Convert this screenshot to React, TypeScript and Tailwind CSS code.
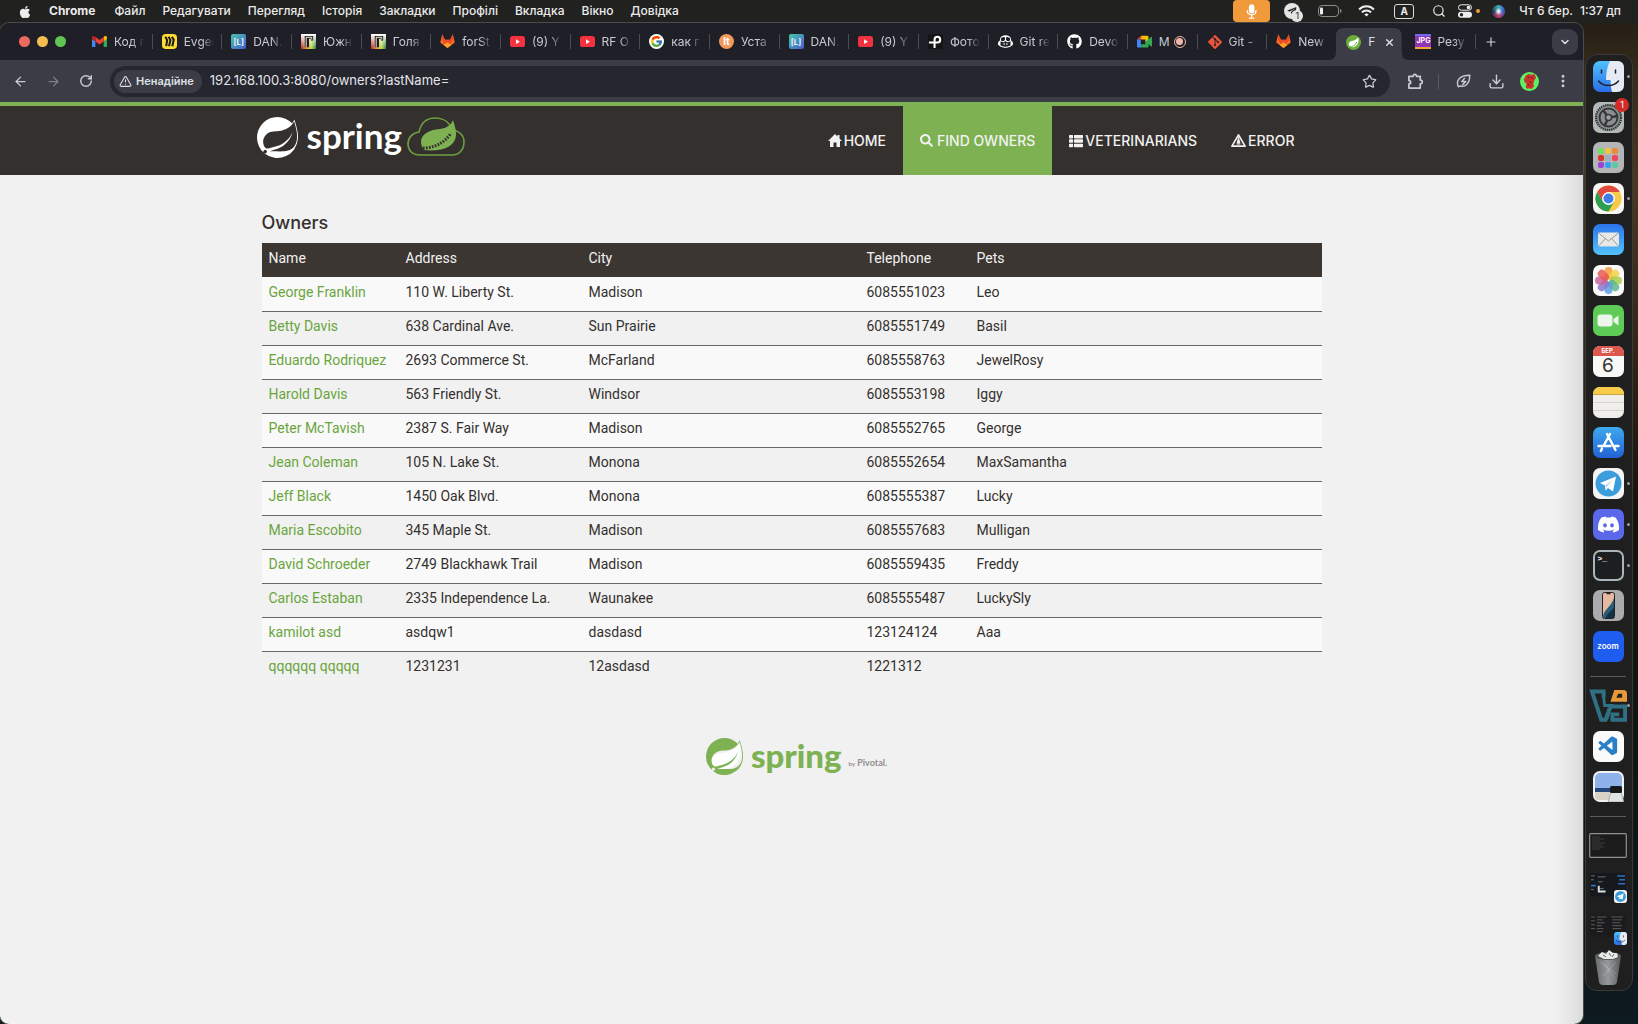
import React from "react";
import {
  ArrowLeft, ArrowRight, RotateCw, Star, Download, EllipsisVertical, Plus, X, ChevronDown,
  Search, TriangleAlert,
} from "lucide-react";
import { FaApple, FaGithub, FaGitAlt, FaThList, FaSearch, FaTelegramPlane, FaDiscord } from "react-icons/fa";
import { SiSpring } from "react-icons/si";
import { FcGoogle } from "react-icons/fc";
import { VscVscode } from "react-icons/vsc";
import { GoCopilot } from "react-icons/go";

const menus = ["Файл", "Редагувати", "Перегляд", "Історія", "Закладки", "Профілі", "Вкладка", "Вікно", "Довідка"];

const owners = [
  ["George Franklin", "110 W. Liberty St.", "Madison", "6085551023", "Leo"],
  ["Betty Davis", "638 Cardinal Ave.", "Sun Prairie", "6085551749", "Basil"],
  ["Eduardo Rodriquez", "2693 Commerce St.", "McFarland", "6085558763", "JewelRosy"],
  ["Harold Davis", "563 Friendly St.", "Windsor", "6085553198", "Iggy"],
  ["Peter McTavish", "2387 S. Fair Way", "Madison", "6085552765", "George"],
  ["Jean Coleman", "105 N. Lake St.", "Monona", "6085552654", "MaxSamantha"],
  ["Jeff Black", "1450 Oak Blvd.", "Monona", "6085555387", "Lucky"],
  ["Maria Escobito", "345 Maple St.", "Madison", "6085557683", "Mulligan"],
  ["David Schroeder", "2749 Blackhawk Trail", "Madison", "6085559435", "Freddy"],
  ["Carlos Estaban", "2335 Independence La.", "Waunakee", "6085555487", "LuckySly"],
  ["kamilot asd", "asdqw1", "dasdasd", "123124124", "Aaa"],
  ["qqqqqq qqqqq", "1231231", "12asdasd", "1221312", ""],
];

/* ---------- tab icons ---------- */

const Gmail = () => (
  <svg viewBox="0 0 24 18" className="w-[15px]">
    <path fill="#4285f4" d="M1.6 18h3.8V8.7L0 4.6v11.8C0 17.300 .7 18 1.600 18z" />
    <path fill="#34a853" d="M18.600 18h3.800c.9 0 1.600-.7 1.600-1.600V4.600l-5.400 4.100z" />
    <path fill="#fbbc04" d="M18.600 1.600v7.100L24 4.600V2.400c0-2-2.300-3.200-3.900-2z" />
    <path fill="#ea4335" d="M5.400 8.700V1.600L12 6.500l6.600-4.900v7.100L12 13.600z" />
    <path fill="#c5221f" d="M0 2.400v2.200l5.400 4.100V1.600L3.900.4C2.300-.8 0 .4 0 2.400z" />
  </svg>
);
const Miro = () => (
  <svg viewBox="0 0 16 16" className="w-[15px]">
    <rect width="16" height="16" rx="4" fill="#ffdd33" />
    <path d="M3.500 3l2 3.500L4.500 13M7 3l2 3.500L7.500 13M10.500 3l2 3L11 13" fill="none" stroke="#1c1c1e" strokeWidth="2.200" />
  </svg>
);
const Dan = () => (
  <span className="flex size-[15px] items-center justify-center rounded-[2px] bg-linear-to-br from-[#49c5a5] to-[#4a55d0] text-[8px] font-semibold text-white">[L]</span>
);
const Gismeteo = () => (
  <svg viewBox="0 0 16 16" className="w-[15px]">
    <defs>
      <linearGradient id="gis"><stop stopColor="#b3202a" /><stop offset=".4" stopColor="#f2a03a" /><stop offset=".7" stopColor="#b8d84a" /><stop offset="1" stopColor="#247a38" /></linearGradient>
      <linearGradient id="gisfade" x2="0" y2="1"><stop stopColor="#fff" /><stop offset="1" stopColor="#fff" stopOpacity="0" /></linearGradient>
    </defs>
    <rect width="16" height="16" fill="url(#gis)" />
    <rect width="16" height="16" fill="url(#gisfade)" />
    <path d="M4 2h9v5h-2.500V5H8.500v9H4z" fill="#1b1b1b" />
    <path d="M5.500 14V3.500h6V6" stroke="#fff" strokeWidth="1" fill="none" />
  </svg>
);
const Gitlab = () => (
  <svg viewBox="0 0 24 23" className="w-[15px]">
    <path fill="#fc6d26" d="M12 22.500L23.600 13.500 20.500.5 16 9H8L3.500.5.4 13.500z" />
    <path fill="#e24329" d="M12 22.500L3 9 3.500.5 8 9h8l4.500-8.500L21 9z" opacity=".75" />
    <path fill="#fca326" d="M12 22.500L6 17.500 12 13l6 4.500z" />
  </svg>
);
const Youtube = () => (
  <svg viewBox="0 0 16 12" className="w-[15px]">
    <rect width="16" height="12" rx="3" fill="#f4323f" />
    <path d="M6.400 3.500l4.200 2.500-4.200 2.500z" fill="#fff" />
  </svg>
);
const Lt = () => <span className="flex size-[15px] items-center justify-center rounded-full bg-[#f39a5b] text-[10px] font-bold text-white">lt</span>;
const Photo = () => (
  <svg viewBox="0 0 16 16" className="w-[15px]">
    <rect width="16" height="16" rx="2" fill="#151515" />
    <path d="M1 9h9a3 3 0 1 0-3-3v9" stroke="#fff" strokeWidth="2.200" fill="none" />
  </svg>
);
const Meet = () => (
  <svg viewBox="0 0 18 16" className="w-[15px]">
    <path fill="#ea4335" d="M0 5.500L5 1v4.500z" />
    <path fill="#fbbc04" d="M5 1h7.500q1.300 0 1.300 1.300V7L10 9V5.500H5z" />
    <path fill="#4285f4" d="M0 5.500h4.600V11H5v4H1.300Q0 15 0 13.700z" />
    <path fill="#34a853" d="M5 11h5V8l7-5.700q1-.5 1 .5v10.500q0 1-1 .4L13.800 11v2.700q0 1.300-1.300 1.300H5z" />
  </svg>
);
const SpringDot = () => (
  <svg viewBox="0 0 16 16" className="w-[15px]">
    <circle cx="8" cy="8" r="8" fill="#6aad3d" />
    <path d="M13 2.500c1.500 5-.5 10-5.500 10.500C4 13.400 2.300 11 3 8.800 4 5.500 10.500 7 13 2.500z" fill="#fff" />
    <path d="M3 13c4-.3 7-2 8.500-5.500" stroke="#6aad3d" fill="none" />
  </svg>
);
const Jpg = () => (
  <span className="flex h-[15px] w-[16px] items-center justify-center border-y-2 border-t-[#6f6af0] border-b-[#f0a53a] bg-[#9334b5] text-[7px] font-bold text-white">JPG</span>
);

const tabs: { label: string; icon: React.ReactNode; kind?: "active" | "rec" | "before" }[] = [
  { label: "Код г", icon: <Gmail /> },
  { label: "Evger", icon: <Miro /> },
  { label: "DAN.", icon: <Dan /> },
  { label: "Южн", icon: <Gismeteo /> },
  { label: "Голя", icon: <Gismeteo /> },
  { label: "forSt", icon: <Gitlab /> },
  { label: "(9) Y", icon: <Youtube /> },
  { label: "RF O", icon: <Youtube /> },
  { label: "как г", icon: <FcGoogle className="size-[15px] rounded-full bg-white p-px" /> },
  { label: "Уста", icon: <Lt /> },
  { label: "DAN.", icon: <Dan /> },
  { label: "(9) Y", icon: <Youtube /> },
  { label: "Фото", icon: <Photo /> },
  { label: "Git re", icon: <GoCopilot className="size-[15px] text-white" /> },
  { label: "Devo", icon: <FaGithub className="size-[15px] text-white" /> },
  { label: "M", icon: <Meet />, kind: "rec" },
  { label: "Git -", icon: <FaGitAlt className="size-[16px] text-[#e8543a]" /> },
  { label: "New", icon: <Gitlab />, kind: "before" },
  { label: "F", icon: <SpringDot />, kind: "active" },
  { label: "Резу", icon: <Jpg /> },
];

function MenuBar() {
  return (
    <header className="flex h-[23px] shrink-0 items-center bg-[#212120] text-[12px] text-[#ececec]">
      <FaApple className="ml-[18px] size-[14px]" />
      <nav className="ml-[17px] flex items-center gap-[17px] pb-[2px]">
        <button className="mr-[2px] text-[12px] font-bold">Chrome</button>
        {menus.map((m) => <button key={m} className="font-medium">{m}</button>)}
      </nav>
      <div className="mr-[17px] ml-auto flex items-center pb-px">
        <span className="flex h-[22px] w-[37px] items-center justify-center rounded-[4px] bg-[#f09a3c] text-white">
          <svg viewBox="0 0 12 16" className="h-[15px]" fill="none" stroke="white" strokeWidth="1.300" strokeLinecap="round">
            <rect x="3.700" y="1" width="4.600" height="8.500" rx="2.300" fill="white" />
            <path d="M1.300 7c0 6 9.400 6 9.400 0M6 12v2.800M3.500 15h5" />
          </svg>
        </span>
        <span className="relative ml-[14px] flex size-[16px] items-center justify-center rounded-full bg-[#e4e4e4]">
          <FaTelegramPlane className="size-[10px] text-[#222]" />
          <span className="absolute -right-[3px] -bottom-[3px] flex size-[12px] items-center justify-center rounded-full bg-[#e4e4e4] text-[9px] text-[#222]">1</span>
        </span>
        <svg viewBox="0 0 24 12" className="ml-[18px] h-[12px] w-[24px]">
          <rect x=".5" y=".5" width="20" height="11" rx="3.500" fill="none" stroke="#8b8b8b" />
          <rect x="2" y="2.500" width="3" height="7" rx="1.200" fill="#eee" />
          <path d="M22 4c2 .5 2 3.500 0 4z" fill="#8b8b8b" />
        </svg>
        <svg viewBox="0 0 18 13" className="ml-[16px] h-[12px] w-[17px]" fill="none" stroke="#eee" strokeWidth="2.200">
          <path d="M1 4.800c4.500-4.500 11.500-4.500 16 0M4 8c2.800-2.800 7.200-2.800 10 0" />
          <path d="M9 12.500L6.600 10c1.300-1.200 3.500-1.200 4.800 0z" fill="#eee" stroke="none" />
        </svg>
        <span className="ml-[19px] flex h-[15px] w-[20px] items-center justify-center rounded-[3px] border border-[#ddd] text-[10px] font-bold">A</span>
        <Search className="ml-[18px] size-[14px]" />
        <svg viewBox="0 0 14 14" className="ml-[12px] size-[14px]">
          <rect x=".5" y=".8" width="13" height="5.400" rx="2.700" fill="none" stroke="#eee" />
          <circle cx="10.500" cy="3.500" r="1.800" fill="#eee" />
          <rect y="7.800" width="14" height="6" rx="3" fill="#eee" />
          <circle cx="3.500" cy="10.800" r="1.700" fill="#222" />
        </svg>
        <span className="ml-[4px] size-[4px] rounded-full bg-[#f09a3c]" />
        <span className="ml-[12px] flex size-[13px] items-center justify-center rounded-full bg-[conic-gradient(#3aa7c9,#3b58c0,#c03a6c,#233a66,#37b08e)]"><span className="size-[5px] rounded-full bg-white blur-[1px]" /></span>
        <span className="ml-[14px] font-medium">Чт 6 бер.</span>
        <span className="ml-[7px] font-medium">1:37 дп</span>
      </div>
    </header>
  );
}

function TabStrip() {
  return (
    <div className="flex h-[37px] items-center bg-[#1f2027]">
      <div className="flex w-[83px] shrink-0 gap-[7px] pl-[19px]">
        <button aria-label="Close" className="size-[11px] rounded-full bg-[#ed6a5e]" />
        <button aria-label="Minimise" className="size-[11px] rounded-full bg-[#f4bf4f]" />
        <button aria-label="Full screen" className="size-[11px] rounded-full bg-[#61c554]" />
      </div>
      <div className="flex h-full min-w-0 flex-1 items-center">
        {tabs.map((t, i) =>
          t.kind === "active" ? (
            <div key={i} className="relative flex h-[33px] min-w-0 flex-1 self-end">
              <svg viewBox="0 0 80 33" preserveAspectRatio="none" className="absolute -left-[8px] h-[33px] w-[calc(100%+10px)]">
                <path d="M0 33Q7 33 7 25V9Q7 1 15 1H65Q73 1 73 9V25Q73 33 80 33z" fill="#3b3c45" />
              </svg>
              <button className="relative flex min-w-0 flex-1 items-center pb-[3px] pl-[9px] text-[12px] text-[#dfe0e6]">
                {t.icon}
                <span className="ml-[7px] w-[8px]">{t.label}</span>
                <X className="ml-[8px] size-[11px]" strokeWidth={3} />
              </button>
            </div>
          ) : (
            <button key={i} className="flex min-w-0 flex-1 items-center text-[12px] text-[#c9cad2]">
              <span className="ml-[9px] flex w-[16px] shrink-0 items-center">{t.icon}</span>
              <span className={t.kind === "rec"
                ? "ml-[6px] text-left whitespace-nowrap"
                : "ml-[6px] w-[30px] [mask-image:linear-gradient(to_right,black_60%,transparent)] text-left whitespace-nowrap"}>{t.label}</span>
              {t.kind === "rec" && <span className="ml-[4px] flex size-[12px] items-center justify-center rounded-full border border-[#f0b7ac]"><span className="size-[7px] rounded-full bg-[#f0b7ac]" /></span>}
              <span className={t.kind === "before" ? "hidden" : "ml-auto h-[15px] w-px bg-[#4b4c55]"} />
            </button>
          ),
        )}
      </div>
      <button aria-label="New tab" className="ml-[8px] text-[#d0d1d8]"><Plus className="size-[14px]" /></button>
      <button aria-label="Search tabs" className="mr-[5px] ml-[54px] flex size-[26px] items-center justify-center rounded-[9px] bg-[#3b3c45] text-[#dfe0e6]"><ChevronDown className="size-[12px]" strokeWidth={3} /></button>
    </div>
  );
}

function Toolbar() {
  return (
    <div className="flex h-[42px] items-center bg-[#3b3c45] text-[#c9cad2]">
      <button aria-label="Back" className="ml-[13px]"><ArrowLeft className="size-[15px]" /></button>
      <button aria-label="Forward" className="ml-[18px] text-[#7e7f88]"><ArrowRight className="size-[15px]" /></button>
      <button aria-label="Reload" className="ml-[18px]"><RotateCw className="size-[14px]" strokeWidth={2.500} /></button>
      <div className="ml-[17px] flex h-[31px] flex-1 items-center rounded-full bg-[#25262e] pr-[13px] pl-[4px]">
        <button className="flex h-[23px] items-center gap-[4px] rounded-full bg-[#3b3c45] pr-[8px] pl-[5px] text-[11px] font-semibold text-[#dfe0e6]">
          <TriangleAlert className="size-[13px]" />Ненадійне
        </button>
        <input aria-label="Address" defaultValue="192.168.100.3:8080/owners?lastName=" className="ml-[8px] min-w-0 flex-1 bg-transparent text-[13px] text-[#e3e4ea] outline-none" />
        <button aria-label="Bookmark"><Star className="size-[15px]" /></button>
      </div>
      <button aria-label="Extensions" className="ml-[17px]">
        <svg viewBox="0 0 18 18" className="size-[17px]" fill="none" stroke="currentColor" strokeWidth="1.800" strokeLinejoin="round">
          <path d="M2 3.500h4.500C6.500.8 10 .8 10 3.500h4v4c2.900 0 2.900 4 0 4v4.500H2v-4.500c2.600 0 2.600-3.500 0-3.500z" />
        </svg>
      </button>
      <span className="ml-[14px] h-[15px] w-px bg-[#5a5b64]" />
      <button aria-label="Energy saver" className="ml-[17px]">
        <svg viewBox="0 0 18 18" className="size-[16px]" fill="none" stroke="currentColor" strokeWidth="1.600" strokeLinejoin="round">
          <path d="M2.500 15.500C0 9 3 2.500 15.500 2.500c0 10-5.500 14-11 12zM10 5.500L6.500 9.500h4.500l-4 4" />
        </svg>
      </button>
      <button aria-label="Downloads" className="ml-[16px]"><Download className="size-[17px]" /></button>
      <button aria-label="Profile" className="ml-[15px]">
        <svg viewBox="0 0 20 20" className="size-[19px]">
          <circle cx="10" cy="10" r="10" fill="#62ee62" />
          <path d="M6 4l3-2 3 1 3-1 2 4-2 3-1 4 1 2-3 3-3-1-1 1-2-2 1-4-2-1-1-3z" fill="#c8342c" />
          <path d="M8 5l2 1M12 5l1 2M10 10l2 2M8 13l2 1" stroke="#5a1512" strokeWidth="1" />
        </svg>
      </button>
      <button aria-label="Menu" className="mr-[12px] ml-[16px]"><EllipsisVertical className="size-[16px]" strokeWidth={2.500} /></button>
    </div>
  );
}

const HomeIcon = () => (
  <svg viewBox="0 0 14 13" className="w-[14px]" fill="currentColor"><path d="M7 0L0 7h2v6h3.500V8.500h3V13H12V7h2l-2.500-2.500V1h-2v1.500z" /></svg>
);
const WarnIcon = () => (
  <svg viewBox="0 0 16 14" className="w-[15px]"><path d="M8 1L15 13H1z" fill="none" stroke="currentColor" strokeWidth="1.800" strokeLinejoin="round" /><path d="M8 4.500L6.800 9h2.400zM6 10.500h4" stroke="currentColor" fill="currentColor" strokeWidth="1.200" /></svg>
);

function SiteHeader() {
  const item = "flex items-center gap-[2px] px-[17px] text-[14px] font-medium uppercase";
  return (
    <header className="border-t-4 border-[#7eb151] bg-[#34302d]">
      <div className="mx-auto flex h-[69px] max-w-[1060px] justify-between text-[#f1f1f1]">
        <a href="#home" aria-label="Spring" className="-ml-[5px] flex items-start pt-[11px]">
          <SiSpring className="size-[41px] text-white" />
          <span className="ml-[9px] text-[35px] leading-[36px] font-bold text-white [font-family:Lato,sans-serif]">spring</span>
          <svg viewBox="0 0 58 39" className="ml-[5px] w-[58px]">
            <path d="M13 38C5 38 1 33 1 27c0-6 4-11 11-12C14 6 20 1 28 1c9 0 15 5 17 12 8 1 12 6 12 12 0 8-5 13-12 13z" fill="none" stroke="#6c9f42" strokeWidth="1.600" />
            <path d="M46 3C44 8 40 11 33 12 22 13 14 17 14 25c0 4 2 6 3 8 18 2 32-3 32-16 0-6-2-10-3-14z" fill="#7eb151" />
            <path d="M16 31c10 0 21-4 28-15" fill="none" stroke="#34302d" strokeWidth="3" strokeDasharray="1.700 1.300" />
          </svg>
        </a>
        <nav className="mr-[10px] flex">
          <a href="#home" className={item}><HomeIcon />Home</a>
          <a href="#find" className="-mt-px flex items-center gap-[4px] bg-[#7eb151] px-[17px] text-[14px] font-medium uppercase"><FaSearch className="size-[13px]" />Find owners</a>
          <a href="#vets" className={item}><FaThList className="size-[14px]" />Veterinarians</a>
          <a href="#error" className={item}><WarnIcon />Error</a>
        </nav>
      </div>
    </header>
  );
}

function OwnersPage() {
  const heads = [["Name", "w-[137px]"], ["Address", "w-[183px]"], ["City", "w-[278px]"], ["Telephone", "w-[110px]"], ["Pets", ""]];
  return (
    <main className="flex-1 bg-[linear-gradient(to_left,#dcdcdc,#f1f1f1_28px)] px-4 [font-family:Roboto,sans-serif]">
      <div className="mx-auto max-w-[1060px]">
        <h2 className="pt-[37px] text-[18px] leading-[22px] font-medium text-[#34302d] [font-family:Inter,sans-serif]">Owners</h2>
        <table className="mt-[9px] w-full table-fixed text-left text-[14px] leading-[19px] whitespace-nowrap text-[#34302d]">
          <thead>
            <tr className="h-[34px] bg-[#3b3632] text-[#f1f1f1]">
              {heads.map(([h, w]) => <th key={h} className={`${w} px-[7px] pb-[3px] font-normal`}>{h}</th>)}
            </tr>
          </thead>
          <tbody>
            {owners.map((o) => (
              <tr key={o[0]} className="h-[34px] border-b border-[#6b6866] last:border-0 odd:bg-[#f9f9f9]">
                <td className="px-[7px] pb-[3px]"><a href="#owner" className="text-[#6aa53c]">{o[0]}</a></td>
                {o.slice(1).map((c, i) => <td key={i} className="px-[7px] pb-[3px]">{c}</td>)}
              </tr>
            ))}
          </tbody>
        </table>
        <div className="mt-[53px] flex items-start justify-center pl-[10px]">
          <span className="relative">
            <svg viewBox="0 0 24 24" className="absolute inset-0 size-[37px]"><path d="M21.500 3c2 6 1 16-9 17-4 .5-7 .3-8-1C2 16 4 11 9 10c5-1 10-1 12.500-7z" fill="#fff" /></svg>
            <SiSpring className="relative size-[37px] text-[#7eb151]" />
          </span>
          <span className="ml-[8px] text-[33px] leading-[34px] font-black text-[#7eb151] [font-family:Lato,sans-serif]">spring</span>
          <span className="mt-[18px] ml-[7px] text-[9px] font-bold text-[#8e8e8e] [font-family:Lato,sans-serif]"><span className="text-[6px]">by</span> Pivotal.</span>
        </div>
      </div>
    </main>
  );
}

/* ---------- dock ---------- */

const FinderFace = ({ c }: { c: string }) => (
  <svg viewBox="0 0 31 31" className={c}>
    <defs><linearGradient id="fb" x2="0" y2="1"><stop stopColor="#4ec3fb" /><stop offset="1" stopColor="#2b6de8" /></linearGradient></defs>
    <rect width="31" height="31" rx="7" fill="url(#fb)" />
    <path d="M17 0h7q7 0 7 7v17q0 7-7 7h-5c-1-4-1.500-7-1.500-12H13C13 12 14 6 17 0z" fill="#e6eaf2" />
    <path d="M8.500 9v3M22.500 9v3M5.500 20c5 6 15 6 20 0" stroke="#223" strokeWidth="1.500" fill="none" strokeLinecap="round" />
  </svg>
);
const Gear = () => (
  <svg viewBox="0 0 31 31" className="size-[31px]">
    <rect width="31" height="31" rx="7" fill="#b4b8b6" />
    <circle cx="15.500" cy="15.500" r="12.500" fill="#8f9492" stroke="#33373a" strokeWidth="2.200" strokeDasharray="1.500 .7" />
    <circle cx="15.500" cy="15.500" r="9" fill="#8b8f8e" stroke="#34383a" strokeWidth="2" />
    <path d="M15.500 15.500L25 14M15.500 15.500L10 8M15.500 15.500L11.500 24" stroke="#34383a" strokeWidth="2.500" />
    <circle cx="15.500" cy="15.500" r="3" fill="#9ca09f" stroke="#34383a" strokeWidth="1.500" />
  </svg>
);
const pads = ["#6fe35a", "#f7c244", "#ee8b3a", "#d8342c", "#9fb0b5", "#ee4560", "#9a45d8", "#35a2f2", "#5cc9a0"];
const Launchpad = () => (
  <span className="grid size-[31px] grid-cols-[6px_6px_6px] content-center justify-center gap-[1px] rounded-[7px] bg-[#b3b5b7]">
    {pads.map((p) => <span key={p} className="size-[6px] rounded-[2px]" style={{ background: p }} />)}
  </span>
);
const Chrome = () => (
  <svg viewBox="0 0 31 31" className="size-[31px]">
    <rect width="31" height="31" rx="7" fill="#f6f6f6" />
    <circle cx="15.500" cy="15.500" r="13" fill="#f7c945" />
    <path d="M4.200 9A13 13 0 0 1 26.800 9H15.500L10 18.700z" fill="#df4a3c" />
    <path d="M4.200 9A13 13 0 0 0 15.500 28.500L21 18.700H10z" fill="#2f9e53" />
    <circle cx="15.500" cy="15.500" r="6.400" fill="#fff" /><circle cx="15.500" cy="15.500" r="5" fill="#3f7ee8" />
  </svg>
);
const Mail = () => (
  <svg viewBox="0 0 31 31" className="size-[31px]">
    <defs><linearGradient id="ml" x2="0" y2="1"><stop stopColor="#2a73ec" /><stop offset="1" stopColor="#55c3fb" /></linearGradient></defs>
    <rect width="31" height="31" rx="7" fill="url(#ml)" />
    <rect x="5" y="8.500" width="21" height="14" rx="1.500" fill="#e8e8e6" />
    <path d="M5.500 9l10 8 10-8M5.500 22l7-7.500M25.500 22l-7-7.500" stroke="#9a9a9a" fill="none" />
  </svg>
);
const petals = ["#f29b38", "#f6cf46", "#a8cf4e", "#5bb98a", "#5c9fe0", "#8d77d0", "#c9659f", "#ea5b50"];
const Photos = () => (
  <svg viewBox="0 0 31 31" className="size-[31px]">
    <rect width="31" height="31" rx="7" fill="#fbfbfb" />
    {petals.map((p, i) => <rect key={p} x="11.500" y="2" width="8" height="12.500" rx="4" fill={p} opacity=".85" transform={`rotate(${i * 45} 15.500 15.500)`} />)}
  </svg>
);
const FaceTime = () => (
  <svg viewBox="0 0 31 31" className="size-[31px]">
    <rect width="31" height="31" rx="7" fill="#5fcb57" />
    <rect x="4.500" y="9.500" width="15" height="12" rx="3" fill="#ecf6ea" /><path d="M20.500 14l5-3.500v10l-5-3.500z" fill="#ecf6ea" />
  </svg>
);
const Calendar = () => (
  <span className="flex size-[31px] flex-col items-center overflow-hidden rounded-[7px] bg-[#f8f8f6] text-[#333]">
    <span className="w-full bg-[#de564c] text-center text-[6px] leading-[10px] font-bold text-white">БЕР.</span>
    <span className="text-[19px] leading-[20px]">6</span>
  </span>
);
const Notes = () => (
  <span className="flex size-[31px] flex-col overflow-hidden rounded-[7px] bg-[#efeeea]">
    <span className="h-[8px] border-b border-[#c9a640] bg-[#f8cb48]" /><span className="h-[8px] border-b border-[#d5d4d0]" /><span className="h-[8px] border-b border-[#d5d4d0]" />
  </span>
);
const AppStore = () => (
  <svg viewBox="0 0 31 31" className="size-[31px]">
    <defs><linearGradient id="as" x2="0" y2="1"><stop stopColor="#3fa9ee" /><stop offset="1" stopColor="#2262d6" /></linearGradient></defs>
    <rect width="31" height="31" rx="7" fill="url(#as)" />
    <path d="M17 7L10.500 19M14 7l8.500 16M5.500 19h12M22 19h3.500M9 21.500L7.800 24" stroke="#fff" strokeWidth="2.400" strokeLinecap="round" />
  </svg>
);
const Telegram = ({ c }: { c: string }) => (
  <svg viewBox="0 0 31 31" className={c}>
    <rect width="31" height="31" rx="7" fill="#f4f4f4" /><circle cx="15.500" cy="15.500" r="13" fill="#3b9ddb" />
    <path d="M7 15l16-6.500-3 15-5-3.500-2.500 2.500-.5-5z" fill="#fff" /><path d="M12 17.500l8-6-6.500 8z" fill="#bcd9ee" />
  </svg>
);
const Discord = () => <span className="flex size-[31px] items-center justify-center rounded-[7px] bg-[#5b68ea]"><FaDiscord className="size-[23px] text-white" /></span>;
const Terminal = () => <span className="flex size-[31px] rounded-[7px] border-2 border-[#a9b5b8] bg-[#1c1e20] pt-px pl-[3px] font-mono text-[8px] leading-[11px] font-bold text-white">&gt;_</span>;
const Phone = () => (
  <svg viewBox="0 0 31 31" className="size-[31px]">
    <rect width="31" height="31" rx="7" fill="#a9abac" /><rect x="9.500" y="2.500" width="12" height="26" rx="2" fill="#e8b9a2" stroke="#222" />
    <path d="M21 8v20H10c0-9 8-10 11-20z" fill="#275d78" /><path d="M21 17v11h-8c1-6 6-6 8-11z" fill="#123144" /><path d="M13.500 3.500h4" stroke="#222" strokeWidth="1.500" />
  </svg>
);
const Zoom = () => <span className="flex size-[31px] items-center justify-center rounded-[7px] bg-[#1f5cf0] pb-px text-[8px] font-semibold text-white">zoom</span>;
const VBox = () => (
  <svg viewBox="0 0 40 34" className="w-[39px]">
    <path d="M15 9V2.500H3L12.500 31.500H17L21 20" fill="none" stroke="#2f7084" strokeWidth="4" />
    <path d="M15 8L16 17H23L18 31.500" fill="none" stroke="#2f7084" strokeWidth="3" />
    <path d="M20 18H37V31.500H24V26H31" fill="none" stroke="#2f7084" strokeWidth="4" />
    <path d="M22 13l4-12h9q4 0 4 4v8z" fill="#e8973a" /><path d="M28 9l2-4h4v4z" fill="#1f1f1f" />
  </svg>
);
const Code = () => <span className="flex size-[31px] items-center justify-center rounded-[7px] bg-[#fbfbfb]"><VscVscode className="size-[23px] text-[#2a80c8]" /></span>;
const Preview = () => (
  <svg viewBox="0 0 31 31" className="size-[31px]">
    <rect x="1" y="1" width="29" height="29" rx="6" fill="#8fb2ea" stroke="#f1f1f1" strokeWidth="2" />
    <path d="M2 17h27v5H2z" fill="#24477e" /><path d="M2 21h27v5q0 3-3 3H5q-3 0-3-3z" fill="#d8d3c6" />
    <path d="M18 21h10l3 10H15z" fill="#dfe3e3" stroke="#8b9090" strokeWidth=".6" /><rect x="17" y="15" width="12" height="7" rx="1.500" fill="#17191b" />
  </svg>
);
const TermWindow = () => (
  <svg viewBox="0 0 38 25" className="w-[38px]">
    <rect x=".7" y=".7" width="36.600" height="23.600" rx="1" fill="#1b1b1c" stroke="#8f9293" strokeWidth="1.200" />
    <path d="M3 4h8M3 6h12M3 8h8M3 10h13M3 12h10M3 14h12M3 16h8" stroke="#4a4a4a" strokeWidth=".7" />
  </svg>
);
const ChatWindow = () => (
  <span className="relative">
    <svg viewBox="0 0 37 27" className="w-[36px]">
      <rect width="37" height="24" fill="#15181d" /><path d="M1 3h4M8 4h8M1 7h3M8 9h5M1 17h3M8 16h6" stroke="#68727c" strokeWidth="1" />
      <path d="M28 3h8M30 7h6M29 11h7M1 13h5" stroke="#2f6fc0" strokeWidth="1.600" /><path d="M9 13v6h7" stroke="#ddd" strokeWidth="2" fill="none" />
    </svg>
    <span className="absolute -right-px -bottom-[4px]"><Telegram c="size-[13px]" /></span>
  </span>
);
const FileWindow = () => (
  <span className="relative">
    <svg viewBox="0 0 37 24" className="w-[36px]">
      <rect width="37" height="22" fill="#1b1b1d" />
      <path d="M1 2h4M7 2h10M22 2h12M7 5h6M7 8h8M7 11h5M7 14h7M7 17h6M23 5h10M23 8h8M23 11h10M23 14h9M1 6h4M1 10h4M1 14h4" stroke="#5d5d60" strokeWidth="1" />
    </svg>
    <span className="absolute -right-px -bottom-[6px]"><FinderFace c="size-[13px]" /></span>
  </span>
);
const Trash = () => (
  <svg viewBox="0 0 28 35" className="w-[28px]">
    <defs><linearGradient id="tr"><stop stopColor="#6f7475" /><stop offset=".5" stopColor="#a3a7a7" /><stop offset="1" stopColor="#5d6263" /></linearGradient></defs>
    <path d="M1 6h26l-4 26q-.5 3-4 3H9q-3.500 0-4-3z" fill="url(#tr)" opacity=".9" />
    <ellipse cx="14" cy="6" rx="13" ry="4" fill="#55595a" />
    <path d="M4 6l4-4 4 2 3-4 4 3 4 0 1 4-5 2-9 0z" fill="#e9e9e6" /><path d="M9 5l3 2M15 3l2 3M20 4l-2 3" stroke="#4b6f8c" />
    <path d="M6 12l16 12M22 12L9 26M9 12l12 17" stroke="#fff" strokeOpacity=".18" />
  </svg>
);

function Slot({ children, dot, badge }: { children: React.ReactNode; dot?: boolean; badge?: boolean }) {
  return (
    <div className="relative flex min-h-0 flex-1 items-center justify-center">
      {children}
      {dot && <span className="absolute right-0 size-[3px] rounded-full bg-[#9b9b9b]" />}
      {badge && <span className="absolute top-px right-px flex size-[14px] items-center justify-center rounded-full bg-[#d12c28] text-[9px] text-white">1</span>}
    </div>
  );
}
const Divider = () => <div className="flex h-[18px] shrink-0 items-center justify-center"><span className="h-px w-[36px] bg-[#5b5b5b]" /></div>;

function Dock() {
  return (
    <aside className="mt-[31px] mr-[5px] mb-[33px] ml-[2px] flex w-[48px] shrink-0 flex-col rounded-[12px] border border-[#3a3a38] bg-[#1f1f1f] pt-px pr-[2px] pb-[2px]">
      <Slot dot><FinderFace c="size-[31px]" /></Slot>
      <Slot badge><Gear /></Slot>
      <Slot><Launchpad /></Slot>
      <Slot dot><Chrome /></Slot>
      <Slot><Mail /></Slot>
      <Slot><Photos /></Slot>
      <Slot><FaceTime /></Slot>
      <Slot><Calendar /></Slot>
      <Slot><Notes /></Slot>
      <Slot><AppStore /></Slot>
      <Slot dot><Telegram c="size-[31px]" /></Slot>
      <Slot dot><Discord /></Slot>
      <Slot dot><Terminal /></Slot>
      <Slot><Phone /></Slot>
      <Slot><Zoom /></Slot>
      <Divider />
      <Slot dot><VBox /></Slot>
      <Slot><Code /></Slot>
      <Slot><Preview /></Slot>
      <Divider />
      <Slot><TermWindow /></Slot>
      <Slot><ChatWindow /></Slot>
      <Slot><FileWindow /></Slot>
      <Slot><Trash /></Slot>
    </aside>
  );
}

export default function App() {
  return (
    <div className="flex h-screen flex-col overflow-hidden bg-[linear-gradient(#1d1a14,#3a2c1c_8%,#4a3822_18%,#3a2a1a_30%,#17120c_50%,#0f1512_75%,#0d1a1e)] [font-family:Inter,sans-serif]">
      <MenuBar />
      <div className="flex min-h-0 flex-1">
        <div className="flex min-w-0 flex-1 flex-col overflow-hidden rounded-[9px] shadow-[0_0_0_1px_#4b4b4b]">
          <TabStrip />
          <Toolbar />
          <SiteHeader />
          <OwnersPage />
        </div>
        <Dock />
      </div>
    </div>
  );
}
